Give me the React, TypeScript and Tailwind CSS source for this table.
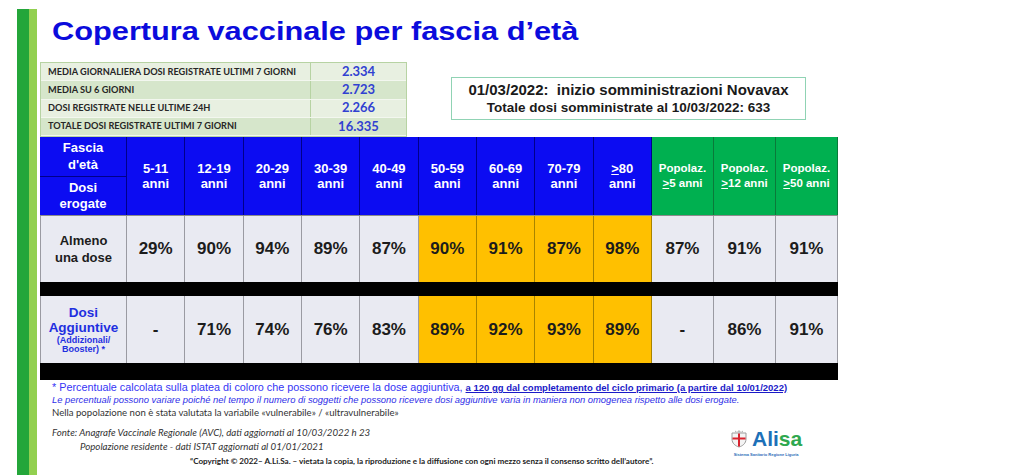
import React from 'react';

const stats = [
  ['MEDIA GIORNALIERA DOSI REGISTRATE ULTIMI 7 GIORNI', '2.334'],
  ['MEDIA SU 6 GIORNI', '2.723'],
  ['DOSI REGISTRATE NELLE ULTIME 24H', '2.266'],
  ['TOTALE DOSI REGISTRATE ULTIMI 7 GIORNI', '16.335'],
];

const ages = ['5-11', '12-19', '20-29', '30-39', '40-49', '50-59', '60-69', '70-79'];
const almeno = ['29%', '90%', '94%', '89%', '87%', '90%', '91%', '87%', '98%', '87%', '91%', '91%'];
const aggiuntive = ['-', '71%', '74%', '76%', '83%', '89%', '92%', '93%', '89%', '-', '86%', '91%'];

const grid = 'grid grid-cols-[87px_repeat(9,58.33px)_repeat(3,62px)]';

const Ge = () => <span className="underline">&gt;</span>;

const ValueCell = ({ v, i }: { v: string; i: number }) => {
  const orange = i >= 5 && i <= 8;
  return (
    <div
      className={`flex items-center justify-center text-[17px] font-bold text-[#1c1c1c] border-r ${
        orange ? 'bg-[#ffc000] border-[#a88400]' : 'bg-[#e9eaf2] border-[#9a9aa2]'
      }`}
    >
      {v}
    </div>
  );
};

const Shield = () => (
  <svg width="18" height="19" viewBox="0 0 18 19">
    <path d="M5 1.5 L7 3 L9 1 L11 3 L13 1.5 L13 3.2 L5 3.2 Z" fill="#b9b9b9" />
    <path d="M2 4 H16 V10 C16 14.5 12.5 17 9 18 C5.5 17 2 14.5 2 10 Z" fill="#f4f4f4" stroke="#9c9c9c" strokeWidth="1" />
    <rect x="8" y="4.5" width="2" height="13" fill="#d9232e" />
    <rect x="2.5" y="8.5" width="13" height="2" fill="#d9232e" />
  </svg>
);

export default function App() {
  return (
    <div className="w-[1024px] h-[475px] bg-white flex pt-[9px] pl-[17px] overflow-hidden font-['Liberation_Sans',Arial,sans-serif]">
      <div className="w-[12px] bg-[#24a63a]" />
      <div className="w-[8px] bg-[#92d050]" />

      <div className="ml-[3px] flex flex-col">
        <h1 className="mt-[10px] ml-[12px] text-[25px] leading-none font-bold text-[#0b0bdc] origin-left scale-x-[1.23] whitespace-nowrap">
          Copertura vaccinale per fascia d’età
        </h1>

        <div className="flex mt-[18px]">
          <div className="w-[367px] border border-[#b7d3a3] flex flex-col">
            {stats.map(([label, value], i) => (
              <div
                key={label}
                className={`flex h-[18.25px] border-b border-[#f3f7ef] ${i % 2 ? 'bg-[#d6e6cb]' : 'bg-[#e8f0e1]'}`}
              >
                <div className="w-[270px] pl-[7px] flex items-center text-[9.2px] font-bold text-[#262626] border-r border-[#b7d3a3] font-['Lato',sans-serif] whitespace-nowrap">
                  {label}
                </div>
                <div className="flex-1 flex items-center justify-center text-[13px] font-bold text-[#3141d1] font-['Lato',sans-serif]">
                  {value}
                </div>
              </div>
            ))}
          </div>

          <div className="ml-[44px] mt-[15px] w-[355px] h-[43px] border-[1.5px] border-[#90d3b4] flex flex-col items-center justify-center text-[#1a1a1a] font-bold">
            <div className="text-[15px] leading-[18px] whitespace-pre">01/03/2022:  inizio somministrazioni Novavax</div>
            <div className="text-[13.5px] leading-[17px]">Totale dosi somministrate al 10/03/2022: 633</div>
          </div>
        </div>

        <div className="w-[798px] flex flex-col">
          <div className={`${grid} h-[78px] text-white font-bold`}>
            <div className="flex flex-col bg-[#0c0cf2] border-r border-[#00008a]">
              <div className="h-[40px] flex flex-col items-center justify-center text-[13px] leading-[16.5px] border-b border-[#00008a]">
                <span>Fascia</span>
                <span>d'età</span>
              </div>
              <div className="flex-1 flex flex-col items-center justify-center text-[13px] leading-[16.5px]">
                <span>Dosi</span>
                <span>erogate</span>
              </div>
            </div>
            {ages.map((a) => (
              <div
                key={a}
                className="bg-[#0c0cf2] border-r border-[#00008a] flex flex-col items-center justify-center text-[13px] leading-[15px]"
              >
                <span>{a}</span>
                <span>anni</span>
              </div>
            ))}
            <div className="bg-[#0c0cf2] border-r border-[#00008a] flex flex-col items-center justify-center text-[13px] leading-[15px]">
              <span>
                <Ge />
                80
              </span>
              <span>anni</span>
            </div>
            {['5', '12', '50'].map((n) => (
              <div
                key={n}
                className="bg-[#00b050] border-r border-[#0a7a3a] flex flex-col items-center justify-center text-[11.5px] leading-[15px]"
              >
                <span>Popolaz.</span>
                <span>
                  <Ge />
                  {n} anni
                </span>
              </div>
            ))}
          </div>

          <div className={`${grid} h-[67px] border-t border-[#8c8c8c]`}>
            <div className="bg-[#e9eaf2] border-l border-r border-[#9a9aa2] flex flex-col items-center justify-center text-[13px] leading-[17px] font-bold text-[#1c1c1c]">
              <span>Almeno</span>
              <span>una dose</span>
            </div>
            {almeno.map((v, i) => (
              <ValueCell key={i} v={v} i={i} />
            ))}
          </div>

          <div className="h-[14px] bg-black" />

          <div className={`${grid} h-[67px]`}>
            <div className="bg-[#e9eaf2] border-l border-r border-[#9a9aa2] flex flex-col items-center justify-center font-bold text-[#1f2fe0]">
              <span className="text-[13.5px] leading-[15px]">Dosi</span>
              <span className="text-[13.5px] leading-[15px]">Aggiuntive</span>
              <span className="text-[9px] leading-[9px] mt-[1px]">(Addizionali/</span>
              <span className="text-[9px] leading-[9px]">Booster) *</span>
            </div>
            {aggiuntive.map((v, i) => (
              <ValueCell key={i} v={v} i={i} />
            ))}
          </div>

          <div className="h-[17px] bg-black" />
        </div>

        <div className="pl-[12px] flex flex-col mt-[1px]">
          <p className="text-[10.8px] leading-[13px] text-[#3535f5] whitespace-nowrap">
            * Percentuale calcolata sulla platea di coloro che possono ricevere la dose aggiuntiva,{' '}
            <span className="font-bold underline text-[9.5px] text-[#1a1ac8]">
              a 120 gg dal completamento del ciclo primario (a partire dal 10/01/2022)
            </span>
          </p>
          <p className="text-[9.4px] leading-[12px] italic text-[#2e2ee8] whitespace-nowrap">
            Le percentuali possono variare poiché nel tempo il numero di soggetti che possono ricevere dosi aggiuntive varia in maniera non omogenea rispetto alle dosi erogate.
          </p>
          <p className="text-[9.6px] leading-[13px] text-[#333] whitespace-nowrap font-['Lato',sans-serif]">
            Nella popolazione non è stata valutata la variabile «vulnerabile» / «ultravulnerabile»
          </p>
        </div>

        <div className="flex">
          <div className="w-[690px] flex flex-col pl-[12px] font-['Lato',sans-serif] text-[#333]">
            <p className="mt-[7px] text-[9.7px] leading-[12px] italic whitespace-nowrap">
              Fonte: Anagrafe Vaccinale Regionale (AVC), dati aggiornati al 10/03/2022 h 23
            </p>
            <p className="mt-[2px] pl-[28px] text-[9.7px] leading-[12px] italic whitespace-nowrap">
              Popolazione residente - dati ISTAT aggiornati al 01/01/2021
            </p>
            <p className="mt-[3px] pl-[138px] text-[8.1px] leading-[12px] font-bold text-[#222] whitespace-nowrap">
              “Copyright © 2022– A.Li.Sa. – vietata la copia, la riproduzione e la diffusione con ogni mezzo senza il consenso scritto dell’autore”.
            </p>
          </div>
          <div className="flex flex-col items-center mt-[9px]">
            <div className="flex items-center gap-[4px]">
              <Shield />
              <span className="text-[21px] font-bold leading-none">
                <span className="text-[#1d70b8]">Ali</span>
                <span className="text-[#2fa84f]">sa</span>
              </span>
            </div>
            <div className="text-[4px] leading-[5px] font-bold text-[#2a6cb8] mt-[3px] whitespace-nowrap">
              Sistema Sanitario Regione Liguria
            </div>
          </div>
        </div>
      </div>
    </div>
  );
}
